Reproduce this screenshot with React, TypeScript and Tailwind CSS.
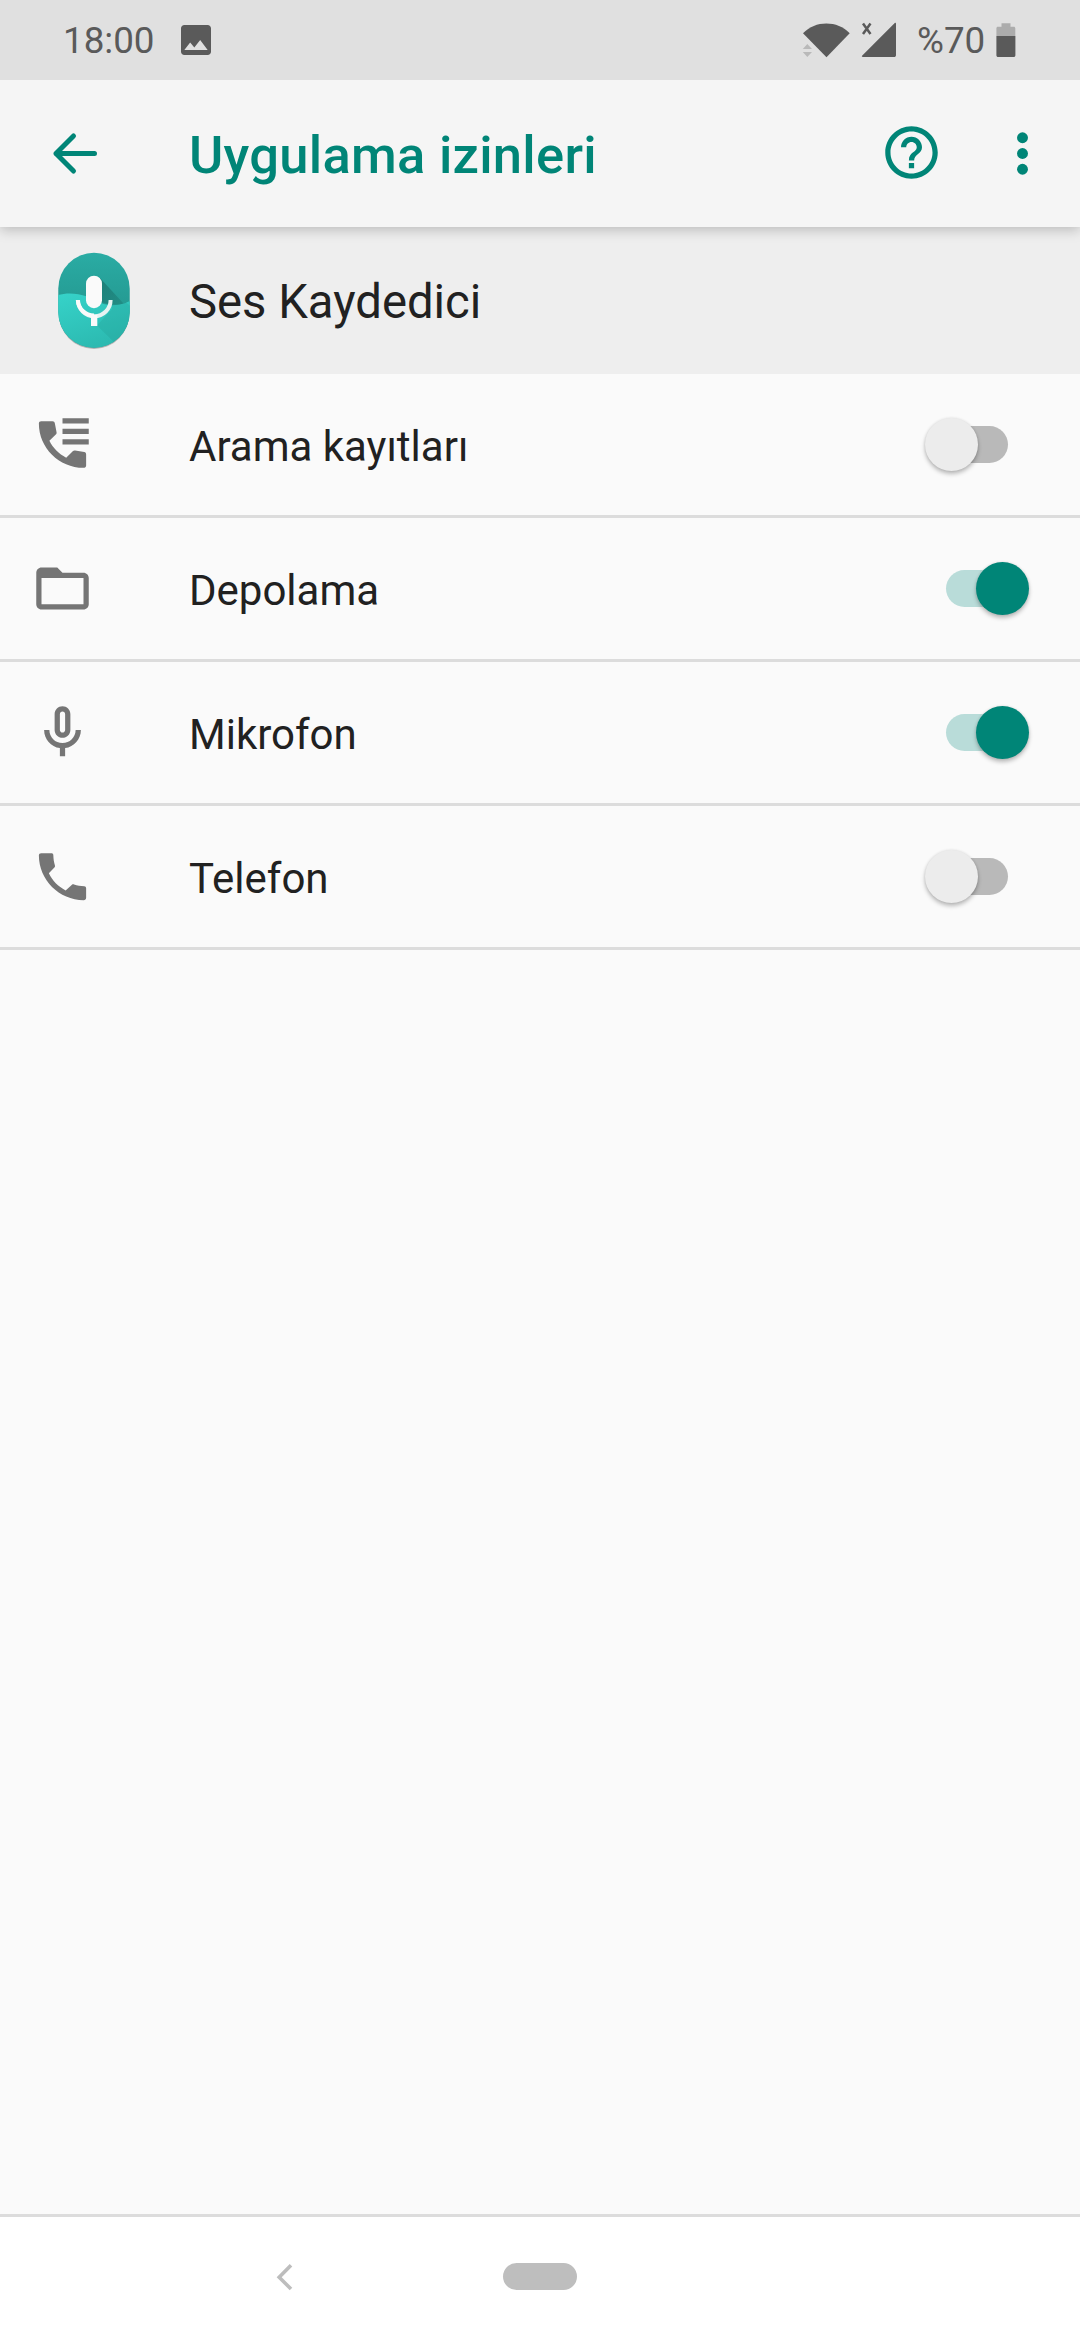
import React, { useState } from 'react';

interface Permission {
  id: string;
  label: string;
  icon: React.ReactNode;
  granted: boolean;
}

const initialPermissions: Permission[] = [
  {
    id: 'call-log',
    label: 'Arama kayıtları',
    granted: false,
    icon: (
      <>
        <path d="M7 10.6 9.55 8.1c.17-.2.25-.45.2-.7L9.1 4c-.1-.5-.4-.83-.9-.83H3.9c-.55 0-.9.33-.9.83C3 13.3 10.7 20.9 20 20.9c.6 0 1-.4 1-.9v-4.2c0-.5-.25-.8-.7-.9l-3.5-.6c-.3-.05-.6 0-.8.2L13.4 17C10.6 15.6 8.4 13.4 7 10.6z" />
        <path d="M12 2h10v2H12zM12 6h10v2H12zM12 10h10v2H12z" />
      </>
    ),
  },
  {
    id: 'storage',
    label: 'Depolama',
    granted: true,
    icon: (
      <path d="M20 6h-8l-2-2H4c-1.1 0-1.99.9-1.99 2L2 18c0 1.1.9 2 2 2h16c1.1 0 2-.9 2-2V8c0-1.1-.9-2-2-2zm0 12H4V8h16v10z" />
    ),
  },
  {
    id: 'microphone',
    label: 'Mikrofon',
    granted: true,
    icon: (
      <path d="M12 14c1.66 0 3-1.34 3-3V5c0-1.66-1.34-3-3-3S9 3.34 9 5v6c0 1.66 1.34 3 3 3zm-1-9c0-.55.45-1 1-1s1 .45 1 1v6c0 .55-.45 1-1 1s-1-.45-1-1V5zm6 6c0 2.76-2.24 5-5 5s-5-2.24-5-5H5c0 3.53 2.61 6.43 6 6.92V21h2v-3.08c3.39-.49 6-3.39 6-6.92h-2z" />
    ),
  },
  {
    id: 'phone',
    label: 'Telefon',
    granted: false,
    icon: (
      <path d="M6.8 10.8 9 8.5c.15-.2.2-.45.12-.7C8.75 6.7 8.55 5.4 8.5 3.85 8.5 3.35 8.2 3.1 7.7 3.1H3.9C3.35 3.1 3 3.4 3 3.9 3 13.3 10.7 21 20.1 21c.5 0 .9-.4.9-.9v-3.6c0-.5-.3-.78-.7-.8-1.4-.05-2.7-.25-3.9-.65-.3-.1-.6-.05-.8.1l-2.4 2.15c-2.9-1.5-5-3.6-6.4-6.5z" />
    ),
  },
];

const StatusBar = () => (
  <div className="relative z-20 flex h-[80px] items-center bg-[#e0e0e0] pl-[63px] text-[36.75px] text-[#5a5a5a]">
    <span className="w-[113px] pt-[2px] leading-[78px]">18:00</span>
    <svg className="h-[40px] w-[40px]" viewBox="0 0 24 24" fill="currentColor">
      <path d="M21 19V5c0-1.100-.9-2-2-2H5c-1.100 0-2 .9-2 2v14c0 1.100.9 2 2 2h14c1.100 0 2-.9 2-2zM8.500 13.500l2.500 3.010L14.500 12l4.500 6H5l3.500-4.500z" />
    </svg>

    <div className="ml-auto flex items-center pr-[64px]">
      {/* Wifi with activity arrows */}
      <svg className="h-[36px] w-[50px]" viewBox="0 0 50 36" fill="currentColor">
        <path d="M2 11.2C8.5 4.5 16.5 1.4 25.3 1.4S42.5 4.5 48.7 11.2L25.5 35.3z" />
        <path d="M1.8 27 6.3 22l4.7 5zM1.8 30h9.2l-4.7 5z" fill="#b9b9b9" />
      </svg>
      {/* Mobile signal, no data */}
      <svg className="ml-[10px] h-[36px] w-[36px]" viewBox="0 0 36 36" fill="currentColor">
        <path d="M33.5 1.3c1-.9 1.5-.4 1.5.6v31c0 1.4-.7 2.1-2 2.1H2c-1.3 0-1.5-.6-.7-1.4z" />
        <path d="M2 1.5 9.5 12M9.5 1.5 2 12" stroke="currentColor" strokeWidth="2.5" />
      </svg>
      <span className="ml-[20px] w-[79px] pt-[2px] leading-[78px]">%70</span>
      <svg className="h-[36px] w-[20px]" viewBox="0 0 20 36" fill="currentColor">
        <path d="M5.5 1.2h9v3.6h3.2c1 0 1.6.6 1.6 1.6V14H.4V6.4c0-1 .6-1.6 1.6-1.6h3.5z" fill="#acacac" />
        <path d="M.4 14h19v19.2c0 1.1-.7 1.8-1.8 1.8H2.2c-1.1 0-1.8-.7-1.8-1.8z" />
      </svg>
    </div>
  </div>
);

const AppBar = () => (
  <header className="relative z-10 flex h-[147px] items-center bg-[#f5f5f5] pl-[44px] text-[#008577] shadow-[0_3px_12px_rgba(0,0,0,0.22)]">
    <button className="h-[63px] w-[63px]" aria-label="Geri">
      <svg
        className="h-[63px] w-[63px]"
        viewBox="0 0 63 63"
        fill="none"
        stroke="currentColor"
        strokeWidth="5"
        strokeLinecap="round"
        strokeLinejoin="round"
      >
        <path d="M12 31.5h38.5M29.5 14 12 31.5 29.5 49" />
      </svg>
    </button>
    <h1 className="ml-[82px] pt-[3px] text-[52.5px] leading-[60px] font-medium tracking-[0.27px]">Uygulama izinleri</h1>
    <button className="mb-[2px] ml-auto h-[63px] w-[63px]" aria-label="Yardım">
      <svg className="h-[63px] w-[63px]" viewBox="0 0 24 24" fill="currentColor">
        <path d="M11 18h2v-2h-2v2zm1-16C6.48 2 2 6.48 2 12s4.48 10 10 10 10-4.48 10-10S17.52 2 12 2zm0 18c-4.41 0-8-3.59-8-8s3.59-8 8-8 8 3.59 8 8-3.59 8-8 8zm0-14c-2.21 0-4 1.79-4 4h2c0-1.1.9-2 2-2s2 .9 2 2c0 2-3 1.75-3 5h2c0-2.25 3-2.5 3-5 0-2.21-1.79-4-4-4z" />
      </svg>
    </button>
    <button className="mr-[26px] ml-[48px] h-[63px] w-[63px]" aria-label="Diğer seçenekler">
      <svg className="h-[63px] w-[63px]" viewBox="0 0 24 24" fill="currentColor">
        <circle cx="12" cy="6" r="2.08" />
        <circle cx="12" cy="12" r="2.08" />
        <circle cx="12" cy="18" r="2.08" />
      </svg>
    </button>
  </header>
);

const RecorderIcon = () => (
  <svg className="h-[98px] w-[72px]" viewBox="0 0 72 98">
    <defs>
      <linearGradient id="back" x1="0" y1="0" x2="0" y2="1">
        <stop offset="0" stopColor="#2aaca4" />
        <stop offset="0.5" stopColor="#259c94" />
      </linearGradient>
      <linearGradient id="wave" x1="0" y1="0" x2="0.4" y2="1">
        <stop offset="0" stopColor="#36d3c9" />
        <stop offset="1" stopColor="#2cbab1" />
      </linearGradient>
      <linearGradient id="fade" gradientUnits="userSpaceOnUse" x1="36" y1="32" x2="68" y2="64">
        <stop offset="0" stopColor="#1b756e" stopOpacity="0.8" />
        <stop offset="1" stopColor="#1b756e" stopOpacity="0.25" />
      </linearGradient>
      <clipPath id="pill">
        <rect x="0.3" y="0.7" width="71.4" height="95" rx="35.7" />
      </clipPath>
    </defs>
    <rect x="0.8" y="3" width="70.4" height="94" rx="35.2" fill="#000" opacity="0.25" />
    <g clipPath="url(#pill)">
      <path d="M0 0h72v97H0z" fill="url(#back)" />
      <path d="M0 43c9-2.500 19-2 29 1.500 11 4.500 22 9.500 32 8 4-.5 8-2 11-3.500v48H0z" fill="url(#wave)" />
      <path d="M42 26 65.500 51.500C57 54 49 53.500 43 51z" fill="url(#fade)" />
      <path d="M54 48v9L39 73.500 60 94l22-22V62L68 50.500c-5 2-9 2-14 1z" fill="#22908a" opacity="0.22" />
    </g>
    <path d="M20 48a16.300 16.300 0 0 0 32.600 0" fill="none" stroke="#e6f3f2" strokeWidth="4" />
    <path d="M33 63h6.300v11H33z" fill="#fafafa" />
    <path d="M19.800 48a16.300 16.300 0 0 0 16.300 15.500" fill="none" stroke="#fafafa" strokeWidth="4" />
    <rect x="28" y="23.700" width="16" height="32.500" rx="8" fill="#fafafa" />
  </svg>
);

interface ToggleProps {
  on: boolean;
  label: string;
  onToggle: () => void;
}

const Toggle: React.FC<ToggleProps> = ({ on, label, onToggle }) => (
  <button
    role="switch"
    aria-checked={on}
    aria-label={label}
    onClick={onToggle}
    className="relative mr-[51px] ml-auto flex h-[53px] w-[104px] items-center justify-center"
  >
    <span className={`h-[37px] w-[62px] rounded-full ${on ? 'bg-[#b9dcd9]' : 'bg-[#b9b9b9]'}`} />
    <span
      className={`absolute top-0 h-[53px] w-[53px] rounded-full shadow-[0_3px_4px_rgba(0,0,0,0.25),0_0_3px_rgba(0,0,0,0.1)] ${
        on ? 'right-0 bg-[#008577]' : 'left-0 bg-[#ececec]'
      }`}
    />
  </button>
);

const App: React.FC = () => {
  const [permissions, setPermissions] = useState(initialPermissions);

  const togglePermission = (id: string) => {
    setPermissions((prev) => prev.map((p) => (p.id === id ? { ...p, granted: !p.granted } : p)));
  };

  return (
    <div className="flex h-[2340px] w-[1080px] flex-col overflow-hidden bg-[#fafafa] font-['Roboto',sans-serif] text-[#212121]">
      <StatusBar />
      <AppBar />

      {/* App the permissions belong to */}
      <div className="flex h-[147px] items-center bg-[#eeeeee] pl-[58px]">
        <RecorderIcon />
        <h2 className="ml-[59px] pt-[3px] text-[47.25px] leading-[56px]">Ses Kaydedici</h2>
      </div>

      {/* Permission list */}
      <ul className="flex-1">
        {permissions.map((p) => (
          <li key={p.id} className="flex h-[144px] items-center border-b-[3px] border-[#dcdcdc] pl-[31px]">
            <svg className="h-[63px] w-[63px] text-[#757575]" viewBox="0 0 24 24" fill="currentColor">
              {p.icon}
            </svg>
            <span className="ml-[95px] pt-[4px] text-[42px] leading-[50px]">{p.label}</span>
            <Toggle on={p.granted} label={p.label} onToggle={() => togglePermission(p.id)} />
          </li>
        ))}
      </ul>

      {/* Navigation bar */}
      <nav className="flex h-[126px] items-center border-t-[3px] border-[#dcdcdc] bg-white pb-[4px] pl-[276px]">
        <svg className="h-[28px] w-[18px]" viewBox="0 0 18 28" fill="none" stroke="#bdbdbd" strokeWidth="3.6">
          <path d="M15 2.3 3.2 14.2 15 26" />
        </svg>
        <span className="ml-[209px] h-[27px] w-[74px] rounded-full bg-[#bebebe]" />
      </nav>
    </div>
  );
};

export default App;
